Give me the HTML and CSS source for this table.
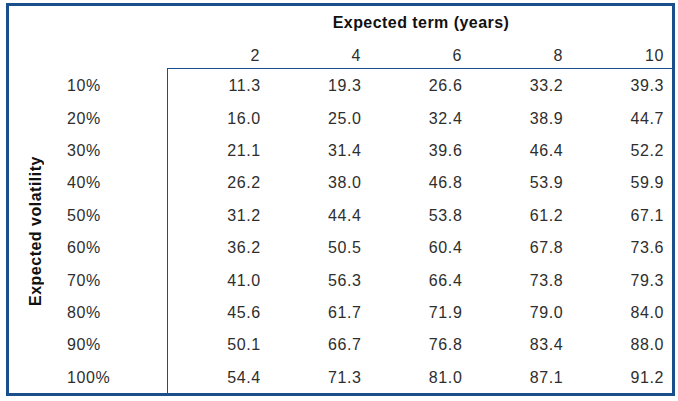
FILE: index.html
```html
<!DOCTYPE html>
<html>
<head>
<meta charset="utf-8">
<link rel="stylesheet" href="styles.css">
</head>
<body>
<div class="box">
  <div class="title">Expected term (years)</div>
  <div class="col-heads">
    <div class="ch">2</div><div class="ch">4</div><div class="ch">6</div><div class="ch">8</div><div class="ch">10</div>
  </div>
  <div class="vlabel"><span class="vtext">Expected volatility</span></div>
  <div class="row-labels">
    <div class="rl">10%</div><div class="rl">20%</div><div class="rl">30%</div><div class="rl">40%</div><div class="rl">50%</div>
    <div class="rl">60%</div><div class="rl">70%</div><div class="rl">80%</div><div class="rl">90%</div><div class="rl">100%</div>
  </div>
  <div class="data">
    <div class="c">11.3</div><div class="c">19.3</div><div class="c">26.6</div><div class="c">33.2</div><div class="c">39.3</div>
    <div class="c">16.0</div><div class="c">25.0</div><div class="c">32.4</div><div class="c">38.9</div><div class="c">44.7</div>
    <div class="c">21.1</div><div class="c">31.4</div><div class="c">39.6</div><div class="c">46.4</div><div class="c">52.2</div>
    <div class="c">26.2</div><div class="c">38.0</div><div class="c">46.8</div><div class="c">53.9</div><div class="c">59.9</div>
    <div class="c">31.2</div><div class="c">44.4</div><div class="c">53.8</div><div class="c">61.2</div><div class="c">67.1</div>
    <div class="c">36.2</div><div class="c">50.5</div><div class="c">60.4</div><div class="c">67.8</div><div class="c">73.6</div>
    <div class="c">41.0</div><div class="c">56.3</div><div class="c">66.4</div><div class="c">73.8</div><div class="c">79.3</div>
    <div class="c">45.6</div><div class="c">61.7</div><div class="c">71.9</div><div class="c">79.0</div><div class="c">84.0</div>
    <div class="c">50.1</div><div class="c">66.7</div><div class="c">76.8</div><div class="c">83.4</div><div class="c">88.0</div>
    <div class="c">54.4</div><div class="c">71.3</div><div class="c">81.0</div><div class="c">87.1</div><div class="c">91.2</div>
  </div>
</div>
</body>
</html>
```

FILE: styles.css
```css
* { box-sizing: border-box; }
html, body { margin: 0; padding: 0; background: #ffffff; }
body {
  width: 678px;
  height: 401px;
  font-family: "Liberation Sans", Arial, sans-serif;
  color: #2e2e2e;
}
.box {
  margin: 3px 0 0 6px;
  width: 669px;
  height: 393px;
  border: 3px solid #1a4f8b;
  display: grid;
  grid-template-columns: 55px 103px 505px;
  grid-template-rows: 32px 30px 325px;
}
.title {
  grid-column: 3;
  grid-row: 1;
  display: flex;
  align-items: center;
  justify-content: center;
  font-size: 16px;
  font-weight: bold;
  letter-spacing: 0.45px;
  color: #111111;
  padding: 1px 0 0 3px;
}
.col-heads {
  grid-column: 3;
  grid-row: 2;
  display: grid;
  grid-template-columns: repeat(5, 1fr);
}
.ch {
  font-size: 16px;
  letter-spacing: 0.6px;
  text-align: right;
  padding: 6px 8px 0 0;
  line-height: 24px;
}
.vlabel {
  grid-column: 1;
  grid-row: 3;
  display: flex;
  align-items: center;
  justify-content: center;
}
.vtext {
  writing-mode: vertical-rl;
  transform: rotate(180deg);
  font-size: 16px;
  font-weight: bold;
  letter-spacing: 0.5px;
  color: #111111;
  margin-right: 1px;
}
.row-labels {
  grid-column: 2;
  grid-row: 3;
  display: grid;
  grid-template-rows: repeat(10, 1fr);
  padding-top: 1px;
}
.rl {
  font-size: 16px;
  letter-spacing: 0.6px;
  padding: 2px 0 0 3px;
  display: flex;
  align-items: center;
}
.data {
  grid-column: 3;
  grid-row: 3;
  border-left: 1px solid #1a4f8b;
  border-top: 1px solid #1a4f8b;
  display: grid;
  grid-template-columns: repeat(5, 1fr);
  grid-template-rows: repeat(10, 1fr);
}
.c {
  font-size: 16px;
  letter-spacing: 0.6px;
  text-align: right;
  padding: 2px 8px 0 0;
  display: flex;
  align-items: center;
  justify-content: flex-end;
}
```
